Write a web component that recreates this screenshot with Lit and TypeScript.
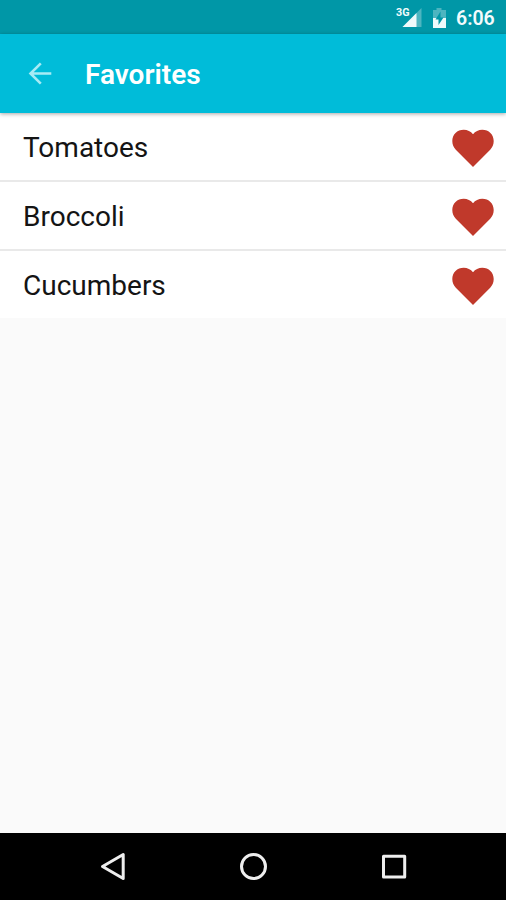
import { LitElement, html, css } from "lit";
import { customElement } from "lit/decorators.js";

@customElement("app-root")
export class AppRoot extends LitElement {
  static styles = css`
    :host {
      display: flex;
      flex-direction: column;
      height: 900px;
      background: #fafafa;
      font-family: Roboto, sans-serif;
      overflow: hidden;
    }
    svg { display: block; flex: none; }
    .status {
      flex: none;
      height: 34px;
      box-sizing: border-box;
      background: #0097a7;
      color: #f2fbfc;
      display: flex;
      justify-content: flex-end;
      align-items: center;
      padding-right: 11px;
    }
    .clock {
      font-size: 19.5px;
      font-weight: 600;
      line-height: 34px;
      width: 39px;
      margin-left: 9px;
      padding-top: 3px;
      white-space: nowrap;
    }
    .glyph-text { font: 700 11px Roboto, sans-serif; fill: #f2fbfc; }
    .bar {
      flex: none;
      height: 79px;
      background: #00bcd9;
      display: flex;
      align-items: center;
      padding-left: 28px;
      box-shadow: 0 1px 4px rgba(0, 0, 0, 0.35);
      z-index: 1;
    }
    .title {
      margin: 2px 0 0 33px;
      font-size: 28px;
      font-weight: 600;
      color: #fff;
      white-space: nowrap;
    }
    .row {
      flex: none;
      height: 67px;
      background: #fff;
      display: flex;
      align-items: center;
      justify-content: space-between;
      padding: 0 12px 0 23px;
      border-bottom: 2px solid #e9e9e9;
    }
    .row:last-child { border-bottom: none; }
    .name { font-size: 28px; color: #141414; padding-top: 2px; }
    .heart { margin-top: 3px; }
    .list { flex: 1; }
    .nav {
      flex: none;
      height: 67px;
      background: #000;
      display: flex;
      align-items: center;
      justify-content: center;
    }
  `;

  private items = ["Tomatoes", "Broccoli", "Cucumbers"];

  render() {
    return html`
      <div class="status">
        <svg width="52" height="34" viewBox="0 0 52 34">
          <path d="M26.500 8V27H7.500Z" fill="#4db5c0" />
          <path d="M21.500 13V27H7.500Z" fill="#eefafb" />
          <text class="glyph-text" x="1" y="16" textLength="13.500" lengthAdjust="spacingAndGlyphs">3G</text>
          <path d="M41.500 8H46.500V10H51V18H38V10H41.500Z" fill="#4db5c0" />
          <path d="M38 18H51V28H38Z" fill="#eefafb" />
          <path d="M45.500 11.500L40.500 19.500H43.500V25L48.500 17.500H45.500Z" fill="#0097a7" />
        </svg>
        <span class="clock">6:06</span>
      </div>
      <div class="bar">
        <svg width="24" height="24" viewBox="0 0 24 24">
          <path d="M23.300 11.500H2.500M12.800 1.300L2.500 11.500L12.800 21.700" fill="none" stroke="#a8ebf5" stroke-width="2.600" />
        </svg>
        <span class="title">Favorites</span>
      </div>
      <div class="list">
        ${this.items.map(
          (name) => html`
            <div class="row">
              <span class="name">${name}</span>
              <svg class="heart" width="42" height="38" viewBox="0 0 42 38">
                <path
                  d="M21 38L3.800 20.800C1.500 18.300 0.300 15.300 0.300 12C0.300 5.500 5.200 0.700 11.700 0.700C15.400 0.700 18.800 2.300 21 5.200C23.200 2.300 26.600 0.700 30.300 0.700C36.800 0.700 41.700 5.500 41.700 12C41.700 15.300 40.500 18.300 38.200 20.800Z"
                  fill="#c0392b"
                />
              </svg>
            </div>
          `
        )}
      </div>
      <div class="nav">
        <svg width="506" height="67" viewBox="0 0 506 67" fill="none" stroke="#eee" stroke-width="3" stroke-linejoin="round">
          <path d="M123.200 21.500V45.500L102.500 33.500Z" />
          <circle cx="253.500" cy="33.500" r="12" />
          <path d="M383.500 23.200H404.700V44H383.500Z" />
        </svg>
      </div>
    `;
  }
}
